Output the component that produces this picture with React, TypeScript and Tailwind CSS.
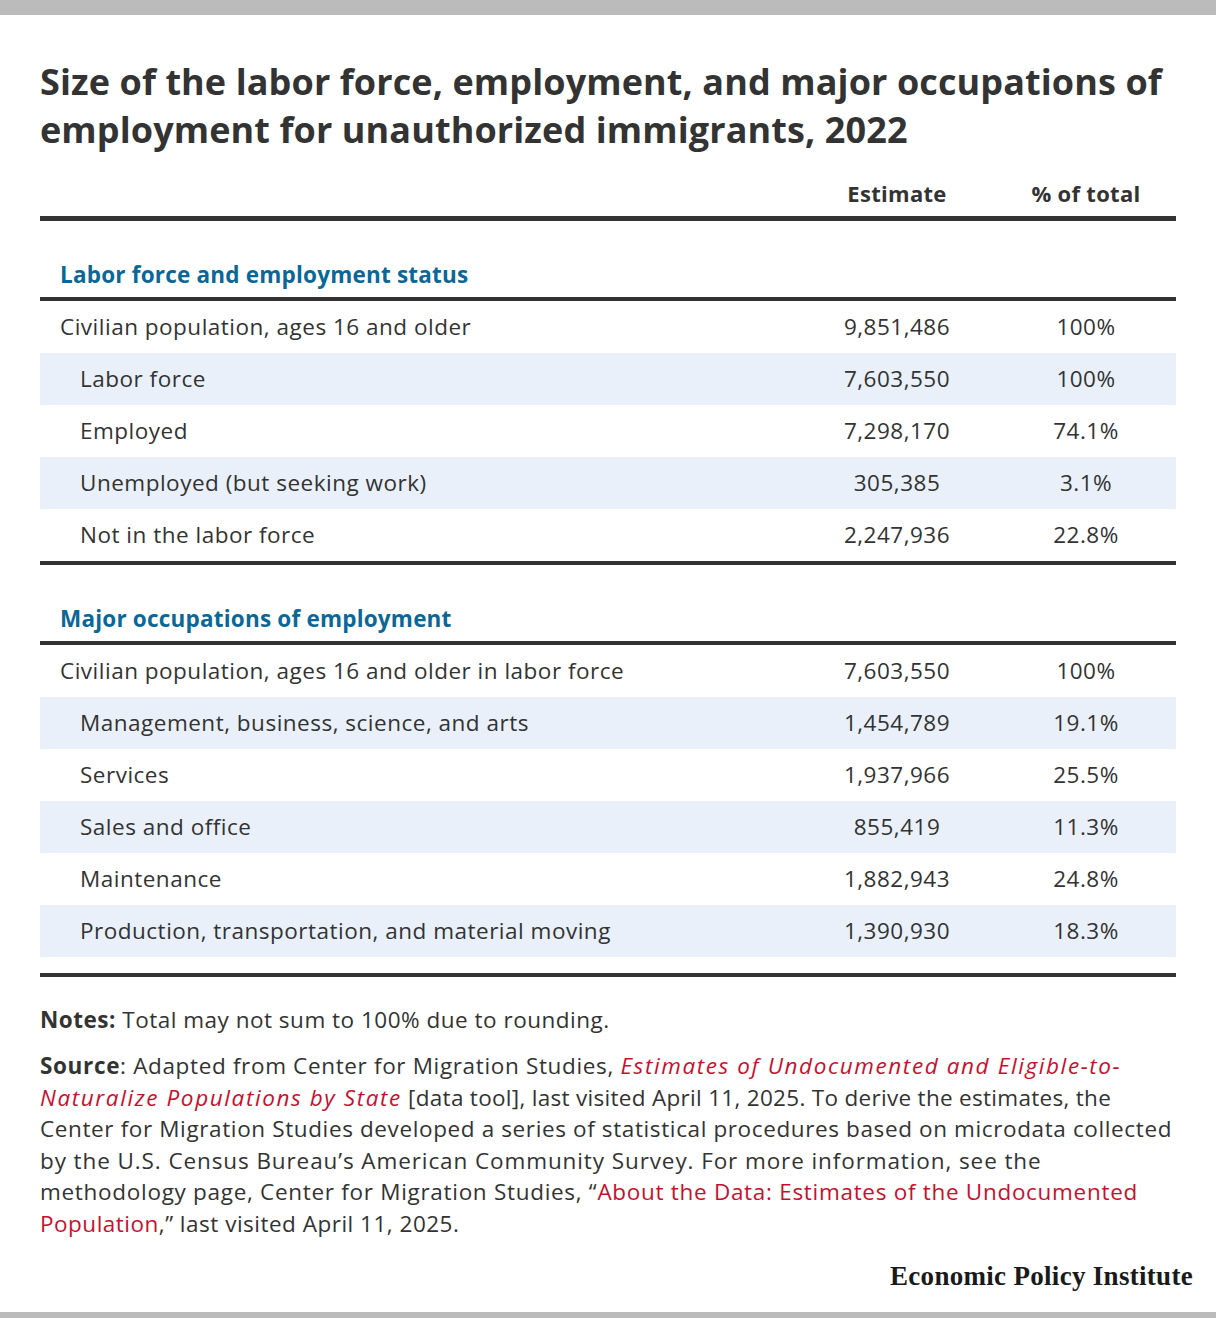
import React from 'react';

type Row = { label: string; estimate: string; pct: string; indent?: boolean };

const laborRows: Row[] = [
  { label: 'Civilian population, ages 16 and older', estimate: '9,851,486', pct: '100%' },
  { label: 'Labor force', estimate: '7,603,550', pct: '100%', indent: true },
  { label: 'Employed', estimate: '7,298,170', pct: '74.1%', indent: true },
  { label: 'Unemployed (but seeking work)', estimate: '305,385', pct: '3.1%', indent: true },
  { label: 'Not in the labor force', estimate: '2,247,936', pct: '22.8%', indent: true },
];

const occupationRows: Row[] = [
  { label: 'Civilian population, ages 16 and older in labor force', estimate: '7,603,550', pct: '100%' },
  { label: 'Management, business, science, and arts', estimate: '1,454,789', pct: '19.1%', indent: true },
  { label: 'Services', estimate: '1,937,966', pct: '25.5%', indent: true },
  { label: 'Sales and office', estimate: '855,419', pct: '11.3%', indent: true },
  { label: 'Maintenance', estimate: '1,882,943', pct: '24.8%', indent: true },
  { label: 'Production, transportation, and material moving', estimate: '1,390,930', pct: '18.3%', indent: true },
];

const gridCols = 'grid grid-cols-[1fr_198px_180px] items-center';

const Section: React.FC<{ title: string; rows: Row[]; trailing?: boolean }> = ({ title, rows, trailing }) => (
  <div>
    <div className="pt-[41px] pb-[9px] pl-[20px] text-[22.5px] tracking-[0.2px] leading-[26px] font-bold text-[#0a6797]">
      {title}
    </div>
    <div className="h-[4px] bg-[#333333]" />
    {rows.map((row, i) => (
      <div
        key={row.label}
        className={`${gridCols} h-[52px] tracking-[0.5px] ${i % 2 === 1 ? 'bg-[#e9f0f9]' : 'bg-white'}`}
      >
        <div className={row.indent ? 'pl-[40px]' : 'pl-[20px]'}>{row.label}</div>
        <div className="text-center">{row.estimate}</div>
        <div className="text-center">{row.pct}</div>
      </div>
    ))}
    {trailing && <div className="h-[16px]" />}
    <div className="h-[4px] bg-[#333333]" />
  </div>
);

export default function App() {
  return (
    <div className="w-[1216px] h-[1318px] bg-white flex flex-col text-[#333333] font-['Open_Sans',sans-serif]">
      <div className="h-[15px] bg-[#bbbbbb]" />
      <div className="flex-1 px-[40px] flex flex-col">
        <h1 className="mt-[43px] text-[36px] leading-[48px] font-bold tracking-[0.1px]">
          Size of the labor force, employment, and major occupations of employment for unauthorized immigrants, 2022
        </h1>

        <div className="text-[22.5px]">
          <div className={`${gridCols} pt-[27px] pb-[11px] text-[22px] font-bold leading-[24px] tracking-[0.3px]`}>
            <div />
            <div className="text-center">Estimate</div>
            <div className="text-center">% of total</div>
          </div>
          <div className="h-[5px] bg-[#333333]" />

          <Section title="Labor force and employment status" rows={laborRows} />
          <Section title="Major occupations of employment" rows={occupationRows} trailing />
        </div>

        <p className="mt-[30px] text-[22.5px] leading-[26px] tracking-[0.5px]">
          <span className="font-bold">Notes:</span> Total may not sum to 100% due to rounding.
        </p>
        <p className="mt-[17px] text-[22.5px] leading-[31.5px] tracking-[0.5px] whitespace-nowrap">
          <span className="block tracking-[0.65px]">
            <span className="font-bold">Source</span>: Adapted from Center for Migration Studies,{' '}
            <span className="italic tracking-[1.6px] text-[#c8102e]">Estimates of Undocumented and Eligible-to-</span>
          </span>
          <span className="block tracking-[0.3px]">
            <span className="italic tracking-[1.6px] text-[#c8102e]">Naturalize Populations by State</span> [data tool],
            last visited April 11, 2025. To derive the estimates, the
          </span>
          <span className="block tracking-[0.62px]">
            Center for Migration Studies developed a series of statistical procedures based on microdata collected
          </span>
          <span className="block tracking-[0.9px]">
            by the U.S. Census Bureau’s American Community Survey. For more information, see the
          </span>
          <span className="block tracking-[0.7px]">
            methodology page, Center for Migration Studies, “
            <span className="text-[#c8102e]">About the Data: Estimates of the Undocumented</span>
          </span>
          <span className="block">
            <span className="text-[#c8102e]">Population</span>,” last visited April 11, 2025.
          </span>
        </p>

        <div className="mt-auto mb-[20px] -mr-[17px] text-right font-['Liberation_Serif',serif] font-bold text-[27px] leading-[32px] tracking-[0.3px] text-[#1a1a1a]">
          Economic Policy Institute
        </div>
      </div>
      <div className="h-[6px] bg-[#bbbbbb]" />
    </div>
  );
}
